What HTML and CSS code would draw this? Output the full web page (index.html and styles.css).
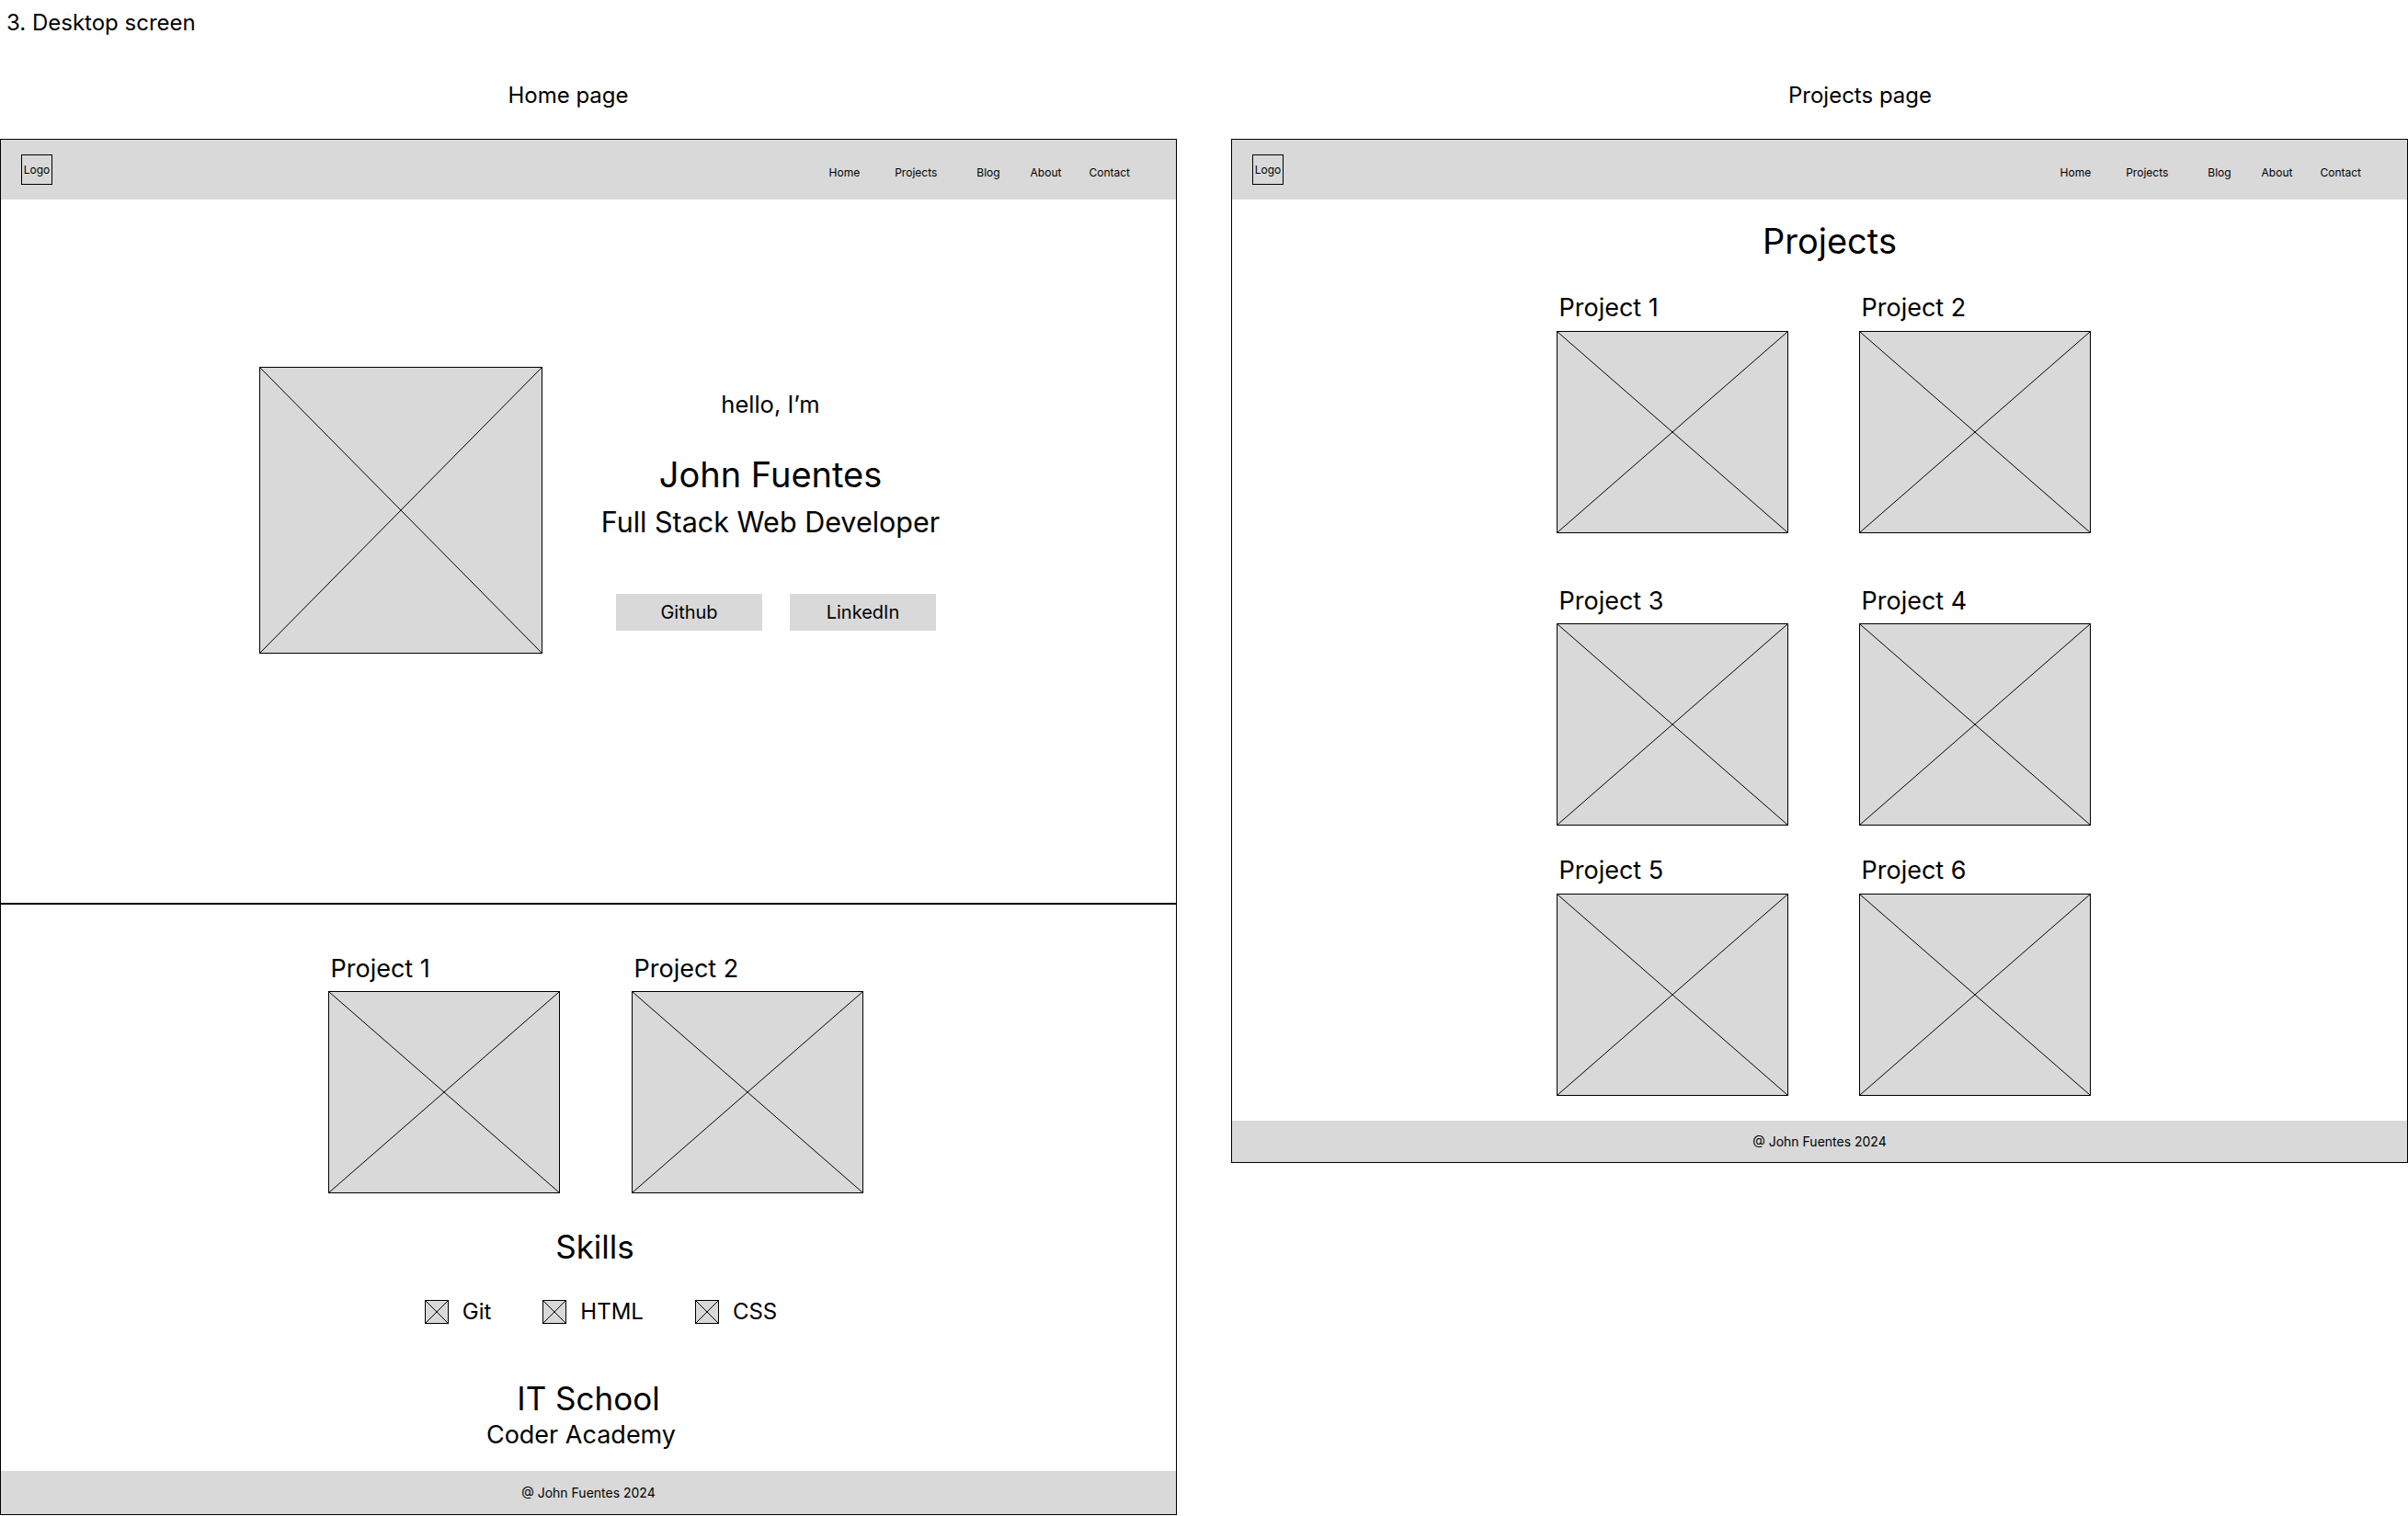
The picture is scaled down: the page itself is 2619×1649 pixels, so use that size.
FILE: index.html
```html
<!DOCTYPE html>
<html lang="en">
<head>
    <meta charset="UTF-8">
    <meta name="viewport" content="width=device-width, initial-scale=1.0">
    <title>Desktop screen wireframes</title>
    <link rel="stylesheet" href="styles.css">
</head>
<body>
    <p class="sheet-title">3. Desktop screen</p>

    <div class="boards">
        <!-- Home page frame -->
        <section class="board board-home">
            <h2 class="board-label">Home page</h2>
            <div class="frame">
                <header class="site-header">
                    <div class="logo">Logo</div>
                    <nav class="site-nav">
                        <a href="#">Home</a>
                        <a href="#">Projects</a>
                        <a href="#">Blog</a>
                        <a href="#">About</a>
                        <a href="#">Contact</a>
                    </nav>
                </header>

                <section class="hero">
                    <div class="placeholder hero-img">
                        <svg viewBox="0 0 100 100" preserveAspectRatio="none"><line x1="0" y1="0" x2="100" y2="100"/><line x1="100" y1="0" x2="0" y2="100"/></svg>
                    </div>
                    <div class="hero-text">
                        <p class="hello">hello, I’m</p>
                        <h1 class="name">John Fuentes</h1>
                        <p class="role">Full Stack Web Developer</p>
                        <div class="hero-links">
                            <a class="btn" href="#">Github</a>
                            <a class="btn" href="#">LinkedIn</a>
                        </div>
                    </div>
                </section>

                <section class="home-lower">
                    <div class="project-row">
                        <div class="project">
                            <p class="project-name">Project 1</p>
                            <div class="placeholder">
                                <svg viewBox="0 0 100 100" preserveAspectRatio="none"><line x1="0" y1="0" x2="100" y2="100"/><line x1="100" y1="0" x2="0" y2="100"/></svg>
                            </div>
                        </div>
                        <div class="project">
                            <p class="project-name">Project 2</p>
                            <div class="placeholder">
                                <svg viewBox="0 0 100 100" preserveAspectRatio="none"><line x1="0" y1="0" x2="100" y2="100"/><line x1="100" y1="0" x2="0" y2="100"/></svg>
                            </div>
                        </div>
                    </div>

                    <h2 class="skills-title">Skills</h2>
                    <ul class="skills">
                        <li class="skill">
                            <span class="placeholder skill-icon"><svg viewBox="0 0 100 100" preserveAspectRatio="none"><line x1="0" y1="0" x2="100" y2="100"/><line x1="100" y1="0" x2="0" y2="100"/></svg></span>
                            Git
                        </li>
                        <li class="skill">
                            <span class="placeholder skill-icon"><svg viewBox="0 0 100 100" preserveAspectRatio="none"><line x1="0" y1="0" x2="100" y2="100"/><line x1="100" y1="0" x2="0" y2="100"/></svg></span>
                            HTML
                        </li>
                        <li class="skill">
                            <span class="placeholder skill-icon"><svg viewBox="0 0 100 100" preserveAspectRatio="none"><line x1="0" y1="0" x2="100" y2="100"/><line x1="100" y1="0" x2="0" y2="100"/></svg></span>
                            CSS
                        </li>
                    </ul>

                    <div class="school">
                        <p class="school-name">IT School</p>
                        <p class="school-sub">Coder Academy</p>
                    </div>
                </section>

                <footer class="site-footer">@ John Fuentes 2024</footer>
            </div>
        </section>

        <!-- Projects page frame -->
        <section class="board board-projects">
            <h2 class="board-label">Projects page</h2>
            <div class="frame">
                <header class="site-header">
                    <div class="logo">Logo</div>
                    <nav class="site-nav">
                        <a href="#">Home</a>
                        <a href="#">Projects</a>
                        <a href="#">Blog</a>
                        <a href="#">About</a>
                        <a href="#">Contact</a>
                    </nav>
                </header>

                <section class="projects-main">
                    <h1 class="projects-title">Projects</h1>
                    <div class="project-grid">
                        <div class="project">
                            <p class="project-name">Project 1</p>
                            <div class="placeholder"><svg viewBox="0 0 100 100" preserveAspectRatio="none"><line x1="0" y1="0" x2="100" y2="100"/><line x1="100" y1="0" x2="0" y2="100"/></svg></div>
                        </div>
                        <div class="project">
                            <p class="project-name">Project 2</p>
                            <div class="placeholder"><svg viewBox="0 0 100 100" preserveAspectRatio="none"><line x1="0" y1="0" x2="100" y2="100"/><line x1="100" y1="0" x2="0" y2="100"/></svg></div>
                        </div>
                        <div class="project">
                            <p class="project-name">Project 3</p>
                            <div class="placeholder"><svg viewBox="0 0 100 100" preserveAspectRatio="none"><line x1="0" y1="0" x2="100" y2="100"/><line x1="100" y1="0" x2="0" y2="100"/></svg></div>
                        </div>
                        <div class="project">
                            <p class="project-name">Project 4</p>
                            <div class="placeholder"><svg viewBox="0 0 100 100" preserveAspectRatio="none"><line x1="0" y1="0" x2="100" y2="100"/><line x1="100" y1="0" x2="0" y2="100"/></svg></div>
                        </div>
                        <div class="project">
                            <p class="project-name">Project 5</p>
                            <div class="placeholder"><svg viewBox="0 0 100 100" preserveAspectRatio="none"><line x1="0" y1="0" x2="100" y2="100"/><line x1="100" y1="0" x2="0" y2="100"/></svg></div>
                        </div>
                        <div class="project">
                            <p class="project-name">Project 6</p>
                            <div class="placeholder"><svg viewBox="0 0 100 100" preserveAspectRatio="none"><line x1="0" y1="0" x2="100" y2="100"/><line x1="100" y1="0" x2="0" y2="100"/></svg></div>
                        </div>
                    </div>
                </section>

                <footer class="site-footer site-footer-short">@ John Fuentes 2024</footer>
            </div>
        </section>
    </div>
</body>
</html>
```

FILE: styles.css
```css
* {
    box-sizing: border-box;
}

body {
    font-family: 'Inter', 'Noto Sans', sans-serif;
    color: #000;
    background-color: #fff;
    margin: 0;
}

p, h1, h2, ul {
    margin: 0;
    padding: 0;
    font-weight: 400;
}

a {
    color: #000;
    text-decoration: none;
}

.sheet-title {
    font-size: 24px;
    line-height: 29px;
    padding: 10px 0 0 7px;
}

.boards {
    display: flex;
    gap: 59px;
    margin-top: 50px;
}

.board {
    width: 1280px;
    flex: none;
}

.board-label {
    font-size: 24px;
    line-height: 29px;
    text-align: center;
    margin-bottom: 33px;
}

.board-home .board-label {
    padding-right: 44px;
}

.board-projects .board-label {
    padding-left: 88px;
}

.frame {
    border: 1px solid #000;
    width: 1280px;
}

/* header / nav */
.site-header {
    height: 65px;
    background-color: #d9d9d9;
    display: flex;
    align-items: center;
    justify-content: space-between;
    padding: 0 50px 0 22px;
}

.logo {
    width: 34px;
    height: 33px;
    border: 1px solid #000;
    font-size: 12px;
    display: flex;
    align-items: center;
    justify-content: center;
}

.site-nav {
    display: flex;
    font-size: 12px;
    padding-top: 5px;
}

.site-nav a:nth-child(2) { margin-left: 38px; }
.site-nav a:nth-child(3) { margin-left: 43px; }
.site-nav a:nth-child(4) { margin-left: 33px; }
.site-nav a:nth-child(5) { margin-left: 30px; }

/* image placeholder box with a cross */
.placeholder {
    display: block;
    background-color: #d9d9d9;
    border: 1px solid #000;
}

.placeholder svg {
    display: block;
    width: 100%;
    height: 100%;
}

.placeholder line {
    stroke: #000;
    stroke-width: 1;
    vector-effect: non-scaling-stroke;
}

/* hero */
.hero {
    display: flex;
    align-items: center;
    justify-content: center;
    gap: 38px;
    padding: 182px 0 271px 50px;
}

.hero-img {
    width: 308px;
    height: 312px;
}

.hero-text {
    width: 420px;
    text-align: center;
}

.hello {
    font-size: 25.5px;
    line-height: 31px;
}

.name {
    font-size: 38px;
    line-height: 46px;
    margin-top: 38.5px;
}

.role {
    font-size: 30.5px;
    line-height: 37px;
    margin-top: 10px;
}

.hero-links {
    display: flex;
    justify-content: center;
    gap: 30px;
    margin-top: 60px;
    padding-left: 12px;
}

.btn {
    width: 159px;
    height: 40px;
    background-color: #d9d9d9;
    font-size: 20px;
    display: flex;
    align-items: center;
    justify-content: center;
}

/* lower part of home */
.home-lower {
    border-top: 2px solid #000;
    padding: 53.5px 0 23.5px;
    display: flex;
    flex-direction: column;
    align-items: center;
}

.project-row {
    display: flex;
    gap: 78px;
    padding-left: 15px;
}

.project-name {
    font-size: 27px;
    line-height: 32px;
    padding-left: 3px;
}

.project .placeholder {
    width: 252px;
    height: 220px;
    margin-top: 8.5px;
}

.skills-title {
    font-size: 35px;
    line-height: 42px;
    margin-top: 37px;
    padding-left: 14px;
}

.skills {
    list-style: none;
    display: flex;
    gap: 56px;
    margin-top: 35px;
    padding-left: 27px;
}

.skill {
    display: flex;
    align-items: center;
    gap: 15px;
    font-size: 24px;
    line-height: 29px;
}

.skill-icon {
    width: 26px;
    height: 26px;
}

.school {
    margin-top: 58.5px;
    text-align: center;
}

.school-name {
    font-size: 35px;
    line-height: 42px;
}

.school-sub {
    font-size: 27px;
    line-height: 33px;
    margin-top: 2px;
    padding-right: 16px;
}

.site-footer {
    height: 47px;
    background-color: #d9d9d9;
    display: flex;
    align-items: center;
    justify-content: center;
    font-size: 14px;
}

.site-footer-short {
    height: 45px;
}

/* projects page */
.projects-main {
    padding: 22px 0 27px;
}

.projects-title {
    font-size: 38px;
    line-height: 46px;
    text-align: center;
    padding-left: 22px;
}

.project-grid {
    display: grid;
    grid-template-columns: repeat(2, 252px);
    column-gap: 77px;
    row-gap: 33px;
    justify-content: center;
    padding-left: 8px;
    margin-top: 34px;
}

.project-grid .project:nth-child(-n+2) {
    margin-bottom: 25px;
}
```
